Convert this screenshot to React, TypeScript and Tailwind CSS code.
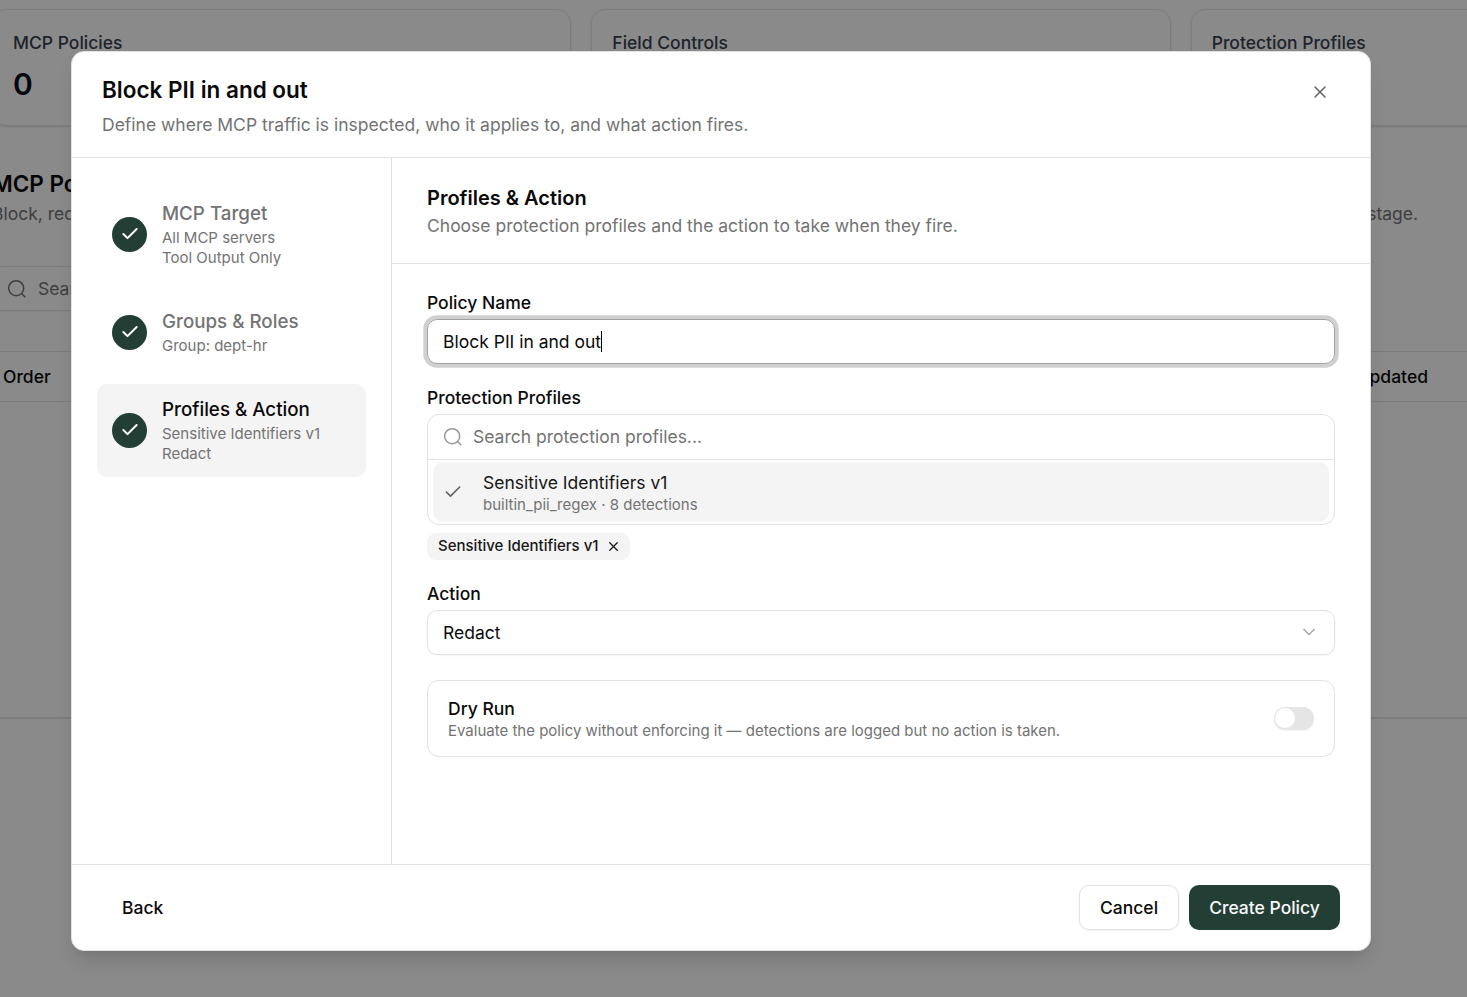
import { useState } from 'react';
import { Check, ChevronDown, X } from 'lucide-react';

interface Step {
  title: string;
  details: string[];
}

const steps: Step[] = [
  { title: 'MCP Target', details: ['All MCP servers', 'Tool Output Only'] },
  { title: 'Groups & Roles', details: ['Group: dept-hr'] },
  { title: 'Profiles & Action', details: ['Sensitive Identifiers v1', 'Redact'] },
];

const stats = [
  { label: 'MCP Policies', value: 0 },
  { label: 'Field Controls', value: 0 },
  { label: 'Protection Profiles', value: 1 },
];

function SearchIcon({ className }: { className?: string }) {
  return (
    <svg
      viewBox="0 0 24 24"
      fill="none"
      stroke="currentColor"
      strokeWidth={1.8}
      strokeLinejoin="round"
      className={className}
    >
      <circle cx="11" cy="11" r="9" />
      <path d="M17.5 17.5 22 22" />
    </svg>
  );
}

function PoliciesPage() {
  return (
    <div className="-ml-2 w-[1778px] pt-[9px]">
      <div className="grid grid-cols-3 gap-5">
        {stats.map((stat) => (
          <div
            key={stat.label}
            className="h-[117px] rounded-[14px] border border-[#e2e2e2] px-5 pt-5 shadow-sm"
          >
            <p className="text-[17.5px] leading-[25px] font-medium text-[#374151]">{stat.label}</p>
            <p className="mt-[7px] text-[30px] leading-[45px] font-semibold text-[#0a1020]">{stat.value}</p>
          </div>
        ))}
      </div>

      <div className="mt-[43px] w-[1426px]">
        <h2 className="text-[22.5px] leading-[30px] font-semibold text-[#0a0a0a]">MCP Policies</h2>
        <div className="flex justify-between text-[17.5px] leading-[30px] text-[#737373]">
          <p>Block, redact</p>
          <p>stage.</p>
        </div>
      </div>

      <div className="mt-[37px] flex h-[45px] w-[500px] items-center gap-[11px] rounded-[10px] border border-[#e2e2e2] pl-[14px] text-[17.5px] text-[#737373] shadow-xs">
        <SearchIcon className="size-5" />
        <span className="pt-0.5">Search policies...</span>
      </div>

      <div className="mt-10 h-[368px] border-t border-b-2 border-[#e2e2e2]">
        <div className="flex h-[50px] items-center justify-between border-b border-[#e2e2e2] pt-0.5 pr-[342px] pl-[11px] text-[17.5px] font-medium text-[#0a0a0a]">
          <span>Order</span>
          <span>Updated</span>
        </div>
      </div>
    </div>
  );
}

function StepItem({ step, active, onClick }: { step: Step; active: boolean; onClick: () => void }) {
  return (
    <button
      onClick={onClick}
      className={`flex w-full items-center gap-[15px] rounded-[10px] px-[15px] pt-[12.5px] pb-[13px] text-left ${
        active ? 'bg-[#f4f4f4]' : ''
      }`}
    >
      <span className="flex size-[35px] shrink-0 items-center justify-center rounded-full bg-[#233f35] text-white">
        <Check className="size-5" strokeWidth={2.4} />
      </span>
      <span className="flex flex-col">
        <span
          className={`mb-[2.5px] text-[18.75px] leading-[25px] font-medium ${
            active ? 'text-[#0a0a0a]' : 'text-[#737373]'
          }`}
        >
          {step.title}
        </span>
        {step.details.map((detail) => (
          <span key={detail} className="text-[15px] leading-5 text-[#737373]">
            {detail}
          </span>
        ))}
      </span>
    </button>
  );
}

export default function App() {
  const [activeStep, setActiveStep] = useState(2);
  const [name, setName] = useState('Block PII in and out');
  const [dryRun, setDryRun] = useState(false);

  return (
    <div className="relative h-[997px] w-full overflow-hidden bg-[#fcfcfc] font-['Inter',sans-serif] antialiased">
      <PoliciesPage />

      <div className="absolute inset-0 flex items-start justify-center bg-black/45 pt-[51px] pr-[25px]">
        <div className="flex h-[900px] w-[1300px] flex-col rounded-[13px] border border-[#e2e2e2] bg-white text-[#0a0a0a] shadow-[0_12.5px_19px_-4px_rgb(0_0_0/0.12),0_5px_7.5px_-5px_rgb(0_0_0/0.1)]">
          <div className="flex h-[106px] shrink-0 justify-between border-b border-[#e2e2e2] px-[30px] pt-[25px]">
            <div>
              <h1 className="text-[22.5px] leading-[25px] font-semibold">{name}</h1>
              <p className="mt-[10px] text-[17.5px] leading-[25px] text-[#737373]">
                Define where MCP traffic is inspected, who it applies to, and what action fires.
              </p>
            </div>
            <button className="-mt-[5px] flex size-10 items-center justify-center text-[#666666]">
              <X className="size-5" strokeWidth={1.9} />
            </button>
          </div>

          <div className="flex min-h-0 flex-1">
            <div className="flex w-80 shrink-0 flex-col gap-[15px] border-r border-[#e2e2e2] px-[25px] pt-[30px]">
              {steps.map((step, i) => (
                <StepItem key={step.title} step={step} active={i === activeStep} onClick={() => setActiveStep(i)} />
              ))}
            </div>

            <div className="flex-1">
              <div className="h-[106px] border-b border-[#e2e2e2] px-[35px] pt-[25px]">
                <h2 className="text-[20px] leading-[30px] font-semibold">Profiles &amp; Action</h2>
                <p className="text-[17.5px] leading-[26px] text-[#737373]">
                  Choose protection profiles and the action to take when they fire.
                </p>
              </div>

              <div className="px-[35px] pt-[30px]">
                {/* Policy name */}
                <div className="text-[17.5px] leading-[18px] font-medium">Policy Name</div>
                <div className="mt-[7px] flex h-[45px] items-center rounded-[10px] border border-[#a1a1a1] px-[15px] text-[17.5px] ring-[3.75px] ring-[#d0d0d0]">
                  <span className="pt-0.5">{name}</span>
                  <span className="h-[21px] w-px bg-black" />
                </div>

                {/* Protection profiles */}
                <div className="mt-[25px] text-[17.5px] leading-[18px] font-medium">Protection Profiles</div>
                <div className="mt-[7px] rounded-xl border border-[#e2e2e2]">
                  <div className="flex h-[45px] items-center gap-2.5 border-b border-[#e2e2e2] px-[15px] text-[17.5px] text-[#737373]">
                    <SearchIcon className="size-5 text-[#999999]" />
                    Search protection profiles...
                  </div>
                  <div className="px-[5px] py-[2px]">
                    <div className="flex h-[60px] items-center gap-5 rounded-[10px] bg-[#f4f4f4] px-[10px]">
                      <Check className="size-5 text-[#666666]" strokeWidth={2} />
                      <div>
                        <p className="text-[17.5px] leading-[25px] text-[#171717]">Sensitive Identifiers v1</p>
                        <p className="text-[15px] leading-5 text-[#737373]">builtin_pii_regex · 8 detections</p>
                      </div>
                    </div>
                  </div>
                </div>
                <div className="mt-2 flex">
                  <span className="flex h-[27px] items-center gap-[7px] rounded-[9px] bg-[#f4f4f4] pr-[9px] pl-[11px] text-[15px] font-medium text-[#171717]">
                    Sensitive Identifiers v1
                    <X className="size-[15px]" strokeWidth={2} />
                  </span>
                </div>

                {/* Action */}
                <div className="mt-[25px] text-[17.5px] leading-[18px] font-medium">Action</div>
                <div className="mt-[7px] flex h-[45px] items-center justify-between rounded-[10px] border border-[#e2e2e2] px-[15px] text-[17.5px] shadow-xs">
                  <span className="pt-0.5">Redact</span>
                  <ChevronDown className="mb-px size-5 text-[#aaaaaa]" strokeWidth={2} />
                </div>

                {/* Dry run */}
                <div className="mt-[25px] flex h-[77px] items-center justify-between rounded-xl border border-[#e2e2e2] px-5">
                  <div>
                    <p className="text-[17.5px] leading-[25px] font-medium">Dry Run</p>
                    <p className="text-[15px] leading-5 text-[#737373]">
                      Evaluate the policy without enforcing it — detections are logged but no action is taken.
                    </p>
                  </div>
                  <button
                    onClick={() => setDryRun(!dryRun)}
                    className={`flex h-[23px] w-10 items-start rounded-full p-px shadow-xs ${
                      dryRun ? 'justify-end bg-[#233f35]' : 'bg-[#e5e5e5]'
                    }`}
                  >
                    <span className="size-5 rounded-full bg-white" />
                  </button>
                </div>
              </div>
            </div>
          </div>

          <div className="flex h-[86px] shrink-0 items-center border-t border-[#e2e2e2] px-[30px] text-[17.5px] font-medium">
            <button className="h-[45px] px-5 pt-0.5">Back</button>
            <button className="ml-auto h-[45px] w-[100px] rounded-[10px] border border-[#e2e2e2] pt-0.5 shadow-xs">
              Cancel
            </button>
            <button className="ml-[10px] h-[45px] w-[151px] rounded-[10px] bg-[#233f35] pt-0.5 text-[#fafafa]">
              Create Policy
            </button>
          </div>
        </div>
      </div>
    </div>
  );
}
